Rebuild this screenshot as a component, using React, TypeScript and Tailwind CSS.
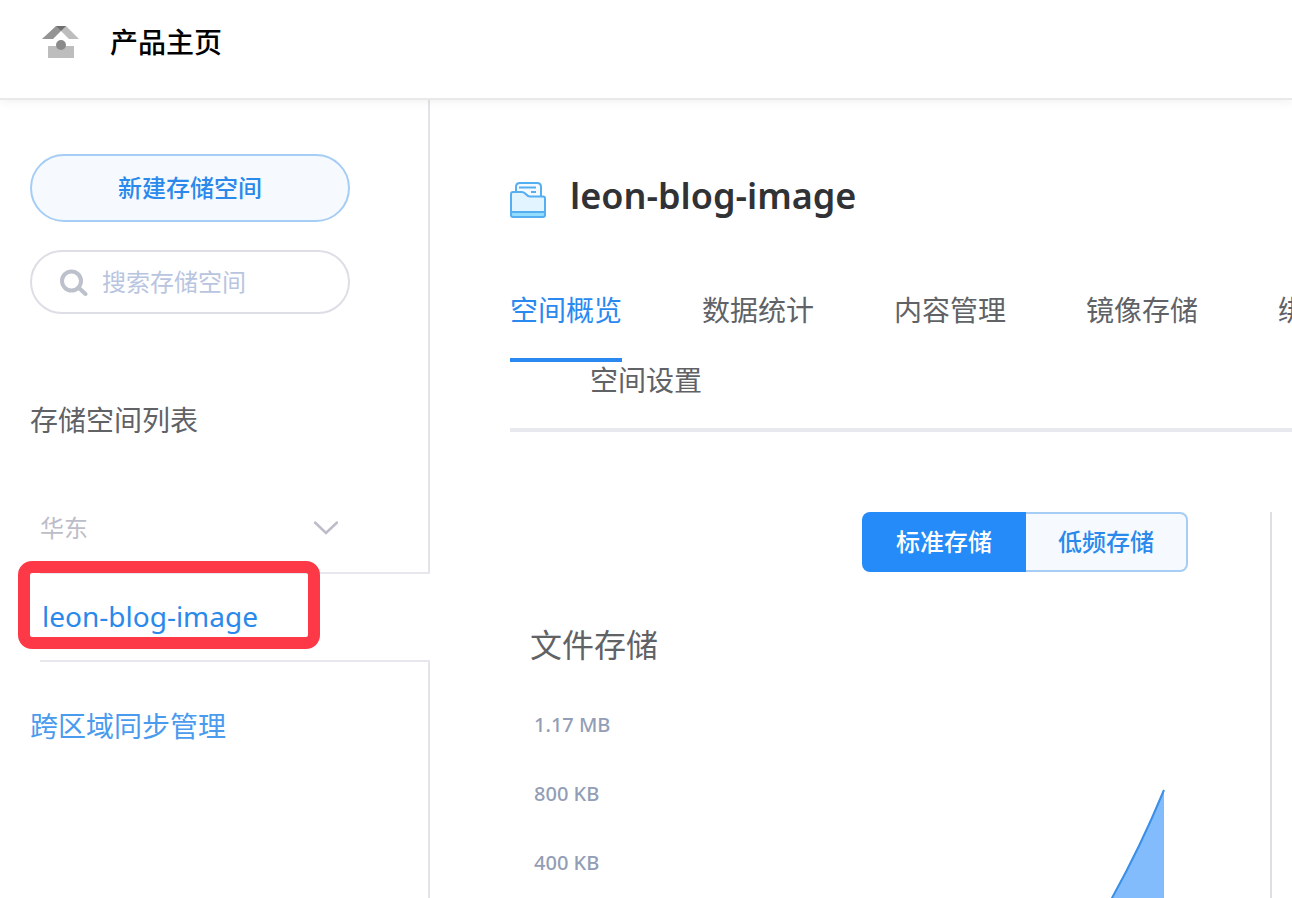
import React from "react";

const tabs = ["空间概览", "数据统计", "内容管理", "镜像存储", "绑定域名", "空间设置"];
const ticks = ["1.17 MB", "800 KB", "400 KB"];

const HomeIcon = () => {
  return (
    <svg width="38" height="34" viewBox="0 0 38 34" aria-hidden="true">
      <path d="M14 0H24L11 13H0Z" fill="#949494" />
      <path d="M14 0H24L37 13H27Z" fill="#bdbdbd" />
      <path d="M14 0H24L19 5Z" fill="#6e6e6e" />
      <path d="M6 20H32V32H6Z" fill="#bdbdbd" />
      <circle cx="19" cy="19" r="5" fill="#8a8a8a" />
    </svg>
  );
};

const FolderIcon = () => {
  return (
    <svg width="36" height="36" viewBox="0 0 36 36" fill="none" aria-hidden="true">
      <path
        d="M6 14V5Q6 1 10 1H27Q31 1 31 5V14"
        fill="#f4faff"
        stroke="#54aef0"
        strokeWidth="2"
      />
      <path d="M9 5.5H26M21 10H26" stroke="#54aef0" strokeWidth="2" />
      <path
        d="M1 12Q1 10 3 10H12C16 10 16 14.500 20 14.500H33Q35 14.500 35 16.500V33Q35 35 33 35H3Q1 35 1 33Z"
        fill="#e2f4ff"
      />
      <path d="M1 30H35V33Q35 35 33 35H3Q1 35 1 33Z" fill="#92dcfd" />
      <path
        d="M1 12Q1 10 3 10H12C16 10 16 14.500 20 14.500H33Q35 14.500 35 16.500V33Q35 35 33 35H3Q1 35 1 33ZM1 30H35"
        stroke="#54aef0"
        strokeWidth="2"
      />
    </svg>
  );
};

const Header = () => {
  return (
    <header className="relative z-10 flex h-[100px] shrink-0 items-start border-b-2 border-[#e9e9e9] bg-white pt-[26px] pl-[42px] shadow-[0_2px_10px_rgba(0,0,0,0.06)]">
      <a href="#home" className="flex items-start gap-[30px]">
        <HomeIcon />
        <span className="text-[28px] leading-8 font-medium text-black">产品主页</span>
      </a>
    </header>
  );
};

const Sidebar = () => {
  return (
    <aside className="flex w-[430px] shrink-0 flex-col">
      <div className="flex flex-col border-r-2 border-[#e3e4ea] pt-[54px] pl-[30px]">
        <button
          type="button"
          className="h-[68px] w-80 rounded-full border-2 border-[#a5cdf5] bg-[#f6faff] text-2xl font-medium text-[#2a89ea]"
        >
          新建存储空间
        </button>
        <label className="mt-7 flex h-16 w-80 items-center rounded-full border-2 border-[#dddee6] pl-7">
          <svg width="28" height="28" viewBox="0 0 28 28" fill="none" className="shrink-0" aria-hidden="true">
            <circle cx="11.500" cy="13" r="9.500" stroke="#bdc1cc" strokeWidth="4" />
            <path d="M19 20L25.500 26" stroke="#bdc1cc" strokeWidth="4" strokeLinecap="round" />
          </svg>
          <input
            type="text"
            aria-label="搜索存储空间"
            placeholder="搜索存储空间"
            className="ml-3.5 w-full min-w-0 bg-transparent text-2xl outline-none placeholder:text-[#b9c5e0]"
          />
        </label>
        <h2 className="mt-[86px] text-[28px] leading-10 text-[#606266]">存储空间列表</h2>
        <button type="button" className="mt-[68px] mb-6 ml-2.5 flex w-[298px] items-center justify-between text-2xl leading-10 text-[#bcbdc9]">
          华东
          <svg width="24" height="14" viewBox="0 0 24 14" fill="none" aria-hidden="true">
            <path d="M1 1.500L12 12L23 1.500" stroke="#bcbdc9" strokeWidth="2.500" strokeLinecap="round" />
          </svg>
        </button>
      </div>
      <div className="relative ml-10 border-y-2 border-[#e6e8ee]">
        <a href="#bucket" className="block pt-[22px] pb-6 pl-0.5 text-[28px] leading-10 text-[#2a89ea]">
          leon-blog-image
        </a>
        <div className="absolute -top-[13px] -left-[22px] h-[88px] w-[302px] rounded-[14px] border-[12px] border-[#fe3947]" />
      </div>
      <div className="grow border-r-2 border-[#e3e4ea] pt-11 pl-[30px]">
        <a href="#sync" className="text-[28px] leading-10 text-[#4a9bee]">
          跨区域同步管理
        </a>
      </div>
    </aside>
  );
};

const Chart = () => {
  return (
    <div className="mt-10 flex justify-between">
      <ul className="flex flex-col pl-1 text-xl font-medium text-[#929db6]">
        {ticks.map((tick) => (
          <li key={tick} className="h-[69px] leading-8">
            {tick}
          </li>
        ))}
      </ul>
      <svg width="554" height="280" viewBox="0 0 554 280" fill="none" aria-hidden="true">
        <path d="M420 280Q484 192 530 81V280H420Z" fill="#82bcfc" />
        <path d="M420 280Q484 192 530 81" stroke="#3a8fe8" strokeWidth="2" />
      </svg>
    </div>
  );
};

const Main = () => {
  return (
    <main className="min-w-0 grow overflow-hidden pt-[76px] pl-20">
      <div className="w-[960px]">
        <div className="flex items-start gap-6">
          <div className="pt-1.5">
            <FolderIcon />
          </div>
          <h1 className="text-4xl leading-10 font-semibold text-[#303236]">leon-blog-image</h1>
        </div>
        <nav className="mt-[74px] flex flex-wrap items-start border-b-4 border-[#e7e9ef] text-[28px] leading-9 text-[#606266]">
          {tabs.map((tab, index) => (
            <a
              key={tab}
              href="#tab"
              className={index === 0 ? "border-b-4 border-[#2a89f0] pb-[30px] text-[#2a89f0]" : "ml-20 pb-[30px]"}
            >
              {tab}
            </a>
          ))}
        </nav>
        <section className="mt-20 w-[762px] border-r-2 border-[#dddee8] pr-[82px] pl-5">
          <div className="flex h-[60px] justify-end text-2xl font-medium">
            <button type="button" className="w-[164px] rounded-l-lg bg-[#248bf8] text-white">
              标准存储
            </button>
            <button
              type="button"
              className="w-[162px] rounded-r-lg border-2 border-l-0 border-[#a5cdf5] bg-[#f6faff] text-[#2a89ea]"
            >
              低频存储
            </button>
          </div>
          <h2 className="mt-[49px] text-[32px] leading-12 text-[#606266]">文件存储</h2>
          <Chart />
        </section>
      </div>
    </main>
  );
};

const App = () => {
  return (
    <div className="flex h-screen flex-col overflow-hidden bg-white font-['Noto_Sans','Noto_Sans_CJK_SC',sans-serif]">
      <Header />
      <div className="flex min-h-0 grow">
        <Sidebar />
        <Main />
      </div>
    </div>
  );
};

export default App;
